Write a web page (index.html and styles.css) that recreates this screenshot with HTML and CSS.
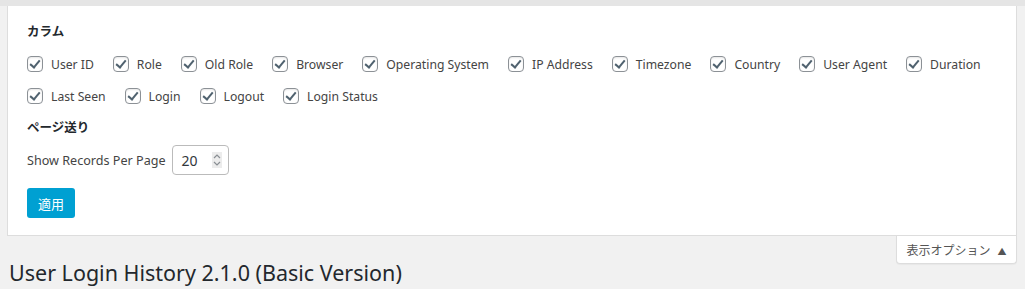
FILE: index.html
```html
<!DOCTYPE html>
<html lang="ja">
<head>
    <meta charset="UTF-8">
    <title>User Login History</title>
    <link rel="stylesheet" href="styles.css">
</head>
<body>
    <div class="top-strip"></div>
    <div class="wrap">
        <div class="screen-meta">
            <fieldset class="columns">
                <legend>カラム</legend>
                <div class="check-list">
                    <label class="check"><input type="checkbox" checked><span>User ID</span></label>
                    <label class="check"><input type="checkbox" checked><span>Role</span></label>
                    <label class="check"><input type="checkbox" checked><span>Old Role</span></label>
                    <label class="check"><input type="checkbox" checked><span>Browser</span></label>
                    <label class="check"><input type="checkbox" checked><span>Operating System</span></label>
                    <label class="check"><input type="checkbox" checked><span>IP Address</span></label>
                    <label class="check"><input type="checkbox" checked><span>Timezone</span></label>
                    <label class="check"><input type="checkbox" checked><span>Country</span></label>
                    <label class="check"><input type="checkbox" checked><span>User Agent</span></label>
                    <label class="check"><input type="checkbox" checked><span>Duration</span></label>
                    <label class="check"><input type="checkbox" checked><span>Last Seen</span></label>
                    <label class="check"><input type="checkbox" checked><span>Login</span></label>
                    <label class="check"><input type="checkbox" checked><span>Logout</span></label>
                    <label class="check"><input type="checkbox" checked><span>Login Status</span></label>
                </div>
            </fieldset>

            <fieldset class="pagination">
                <legend>ページ送り</legend>
                <label class="per-page">
                    Show Records Per Page
                    <span class="number-box">
                        <span class="number-value">20</span>
                        <span class="spinner">
                            <svg width="10" height="16" viewBox="0 0 10 16">
                                <path d="M2 6 L5 3 L8 6" fill="none" stroke="#8a8f94" stroke-width="1.2"/>
                                <path d="M2 10 L5 13 L8 10" fill="none" stroke="#8a8f94" stroke-width="1.2"/>
                            </svg>
                        </span>
                    </span>
                </label>
            </fieldset>

            <button class="apply-btn">適用</button>
        </div>

        <div class="meta-links">
            <button class="options-tab">表示オプション <span class="arrow">▲</span></button>
        </div>

        <h1 class="page-title">User Login History 2.1.0 (Basic Version)</h1>
    </div>
</body>
</html>
```

FILE: styles.css
```css
body {
    margin: 0;
    padding: 0;
    background: #f1f1f1;
    font-family: 'Noto Sans', 'Noto Sans CJK JP', sans-serif;
    font-size: 12.2px;
    color: #444;
}

.top-strip {
    height: 6px;
    background: #e5e5e5;
}

.wrap {
    margin: 0 8px 0 7px;
}

.screen-meta {
    background: white;
    border: 1px solid #ddd;
    border-top: none;
    padding: 14px 20px 17px 19px;
}

fieldset {
    border: none;
    margin: 0;
    padding: 0;
}

legend {
    padding: 0;
    font-weight: 600;
    color: #23282d;
    font-size: 12.5px;
    line-height: 24px;
}

.check-list {
    display: flex;
    flex-wrap: wrap;
    column-gap: 19px;
    padding-top: 4px;
}

.check {
    display: flex;
    align-items: center;
    height: 32px;
    gap: 8px;
}

.check input {
    appearance: none;
    width: 16px;
    height: 16px;
    margin: 0;
    border: 1px solid #8c9196;
    border-radius: 4px;
    background: white;
    box-shadow: inset 0 1px 2px rgba(0,0,0,0.1);
    position: relative;
}

.check input::after {
    content: '';
    position: absolute;
    left: 4px;
    top: 1px;
    width: 4px;
    height: 8px;
    border: solid #50626f;
    border-width: 0 2px 2px 0;
    transform: rotate(40deg);
}

.pagination {
    margin-top: 4px;
}

.per-page {
    display: flex;
    align-items: center;
    gap: 6px;
    margin-top: 5px;
    font-size: 12.6px;
}

.number-box {
    display: flex;
    align-items: center;
    justify-content: space-between;
    width: 57px;
    height: 30px;
    box-sizing: border-box;
    padding: 0 6px 0 9px;
    border: 1px solid #bbb;
    border-radius: 4px;
    background: white;
    font-size: 14px;
    color: #32373c;
}

.spinner {
    display: flex;
    background: #ececec;
    height: 16px;
}

.apply-btn {
    margin-top: 13px;
    background: #00a0d2;
    color: white;
    border: none;
    border-radius: 3px;
    height: 30px;
    width: 48px;
    padding: 0;
    font-family: inherit;
    font-size: 13px;
}

.meta-links {
    display: flex;
    justify-content: flex-end;
}

.options-tab {
    background: white;
    border: 1px solid #ddd;
    border-top: none;
    border-radius: 0 0 4px 4px;
    height: 28px;
    width: 121px;
    padding: 0;
    font-family: inherit;
    font-size: 12px;
    color: #555;
    box-shadow: 0 1px 1px rgba(0,0,0,0.04);
}

.arrow {
    font-size: 9px;
    margin-left: 4px;
}

.page-title {
    margin: -6px 0 0 2px;
    font-size: 21.5px;
    line-height: 29px;
    font-weight: 400;
    color: #23282d;
}
```
